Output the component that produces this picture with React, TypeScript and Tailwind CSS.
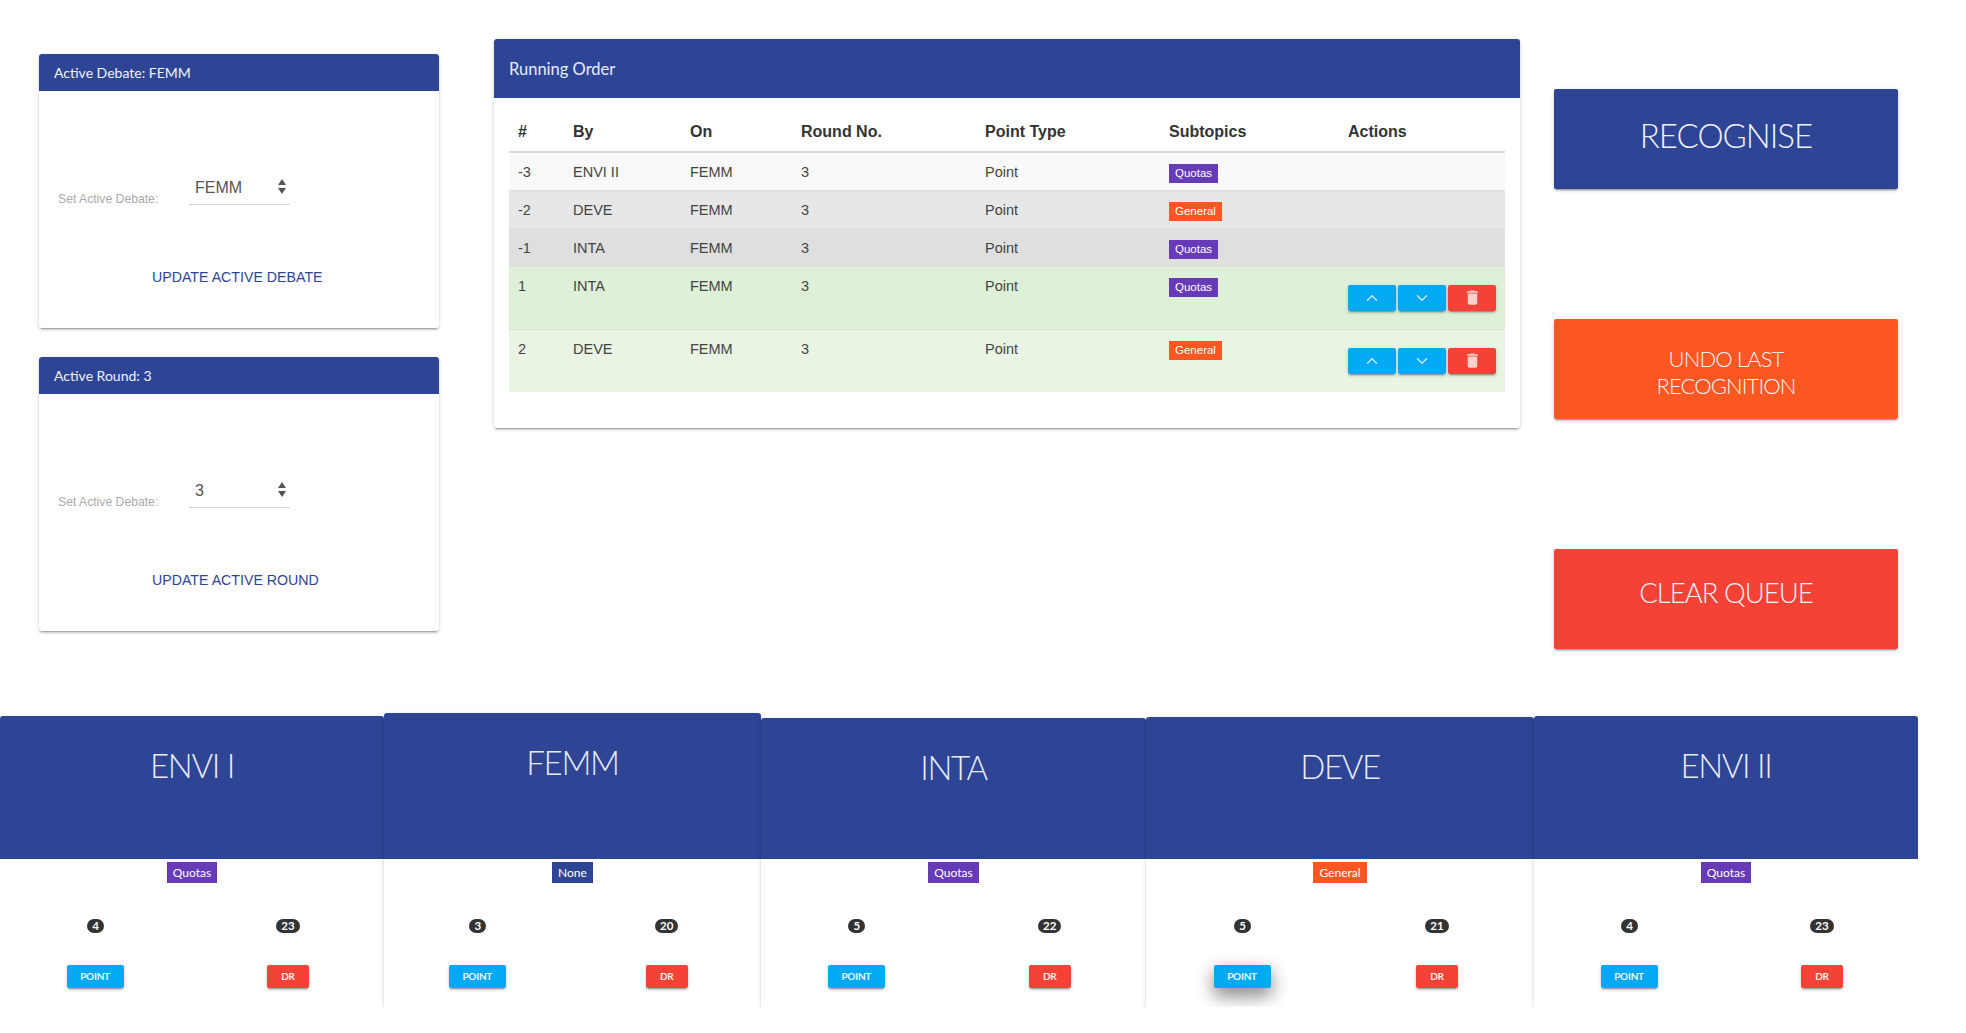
import { ChevronDown, ChevronUp } from "lucide-react";

const DEPTH_1 =
  "shadow-[0_2px_2px_0_rgba(0,0,0,0.14),0_3px_1px_-2px_rgba(0,0,0,0.2),0_1px_5px_0_rgba(0,0,0,0.12)]";

const TOPIC_COLOR: Record<string, string> = {
  Quotas: "bg-[#673ab7]",
  General: "bg-[#ff5722]",
  None: "bg-[#2e4595]",
};

const queue = [
  { n: "-3", by: "ENVI II", topic: "Quotas", bg: "bg-[#f9f9f9]" },
  { n: "-2", by: "DEVE", topic: "General", bg: "bg-[#e7e7e7]" },
  { n: "-1", by: "INTA", topic: "Quotas", bg: "bg-[#dfdfdf]" },
  { n: "1", by: "INTA", topic: "Quotas", bg: "bg-[#dff0d8]", actions: true },
  { n: "2", by: "DEVE", topic: "General", bg: "bg-[#eaf4e4]", actions: true },
];

// headers share a baseline at the bottom, so the taller cards start higher up
const committees = [
  { name: "ENVI I", topic: "Quotas", points: 4, drs: 23, width: "w-[384px]", top: "mt-[5px]", head: "h-[143px]" },
  { name: "FEMM", topic: "None", points: 3, drs: 20, width: "w-[377px]", top: "mt-[2px]", head: "h-[146px]" },
  { name: "INTA", topic: "Quotas", points: 5, drs: 22, width: "w-[385px]", top: "mt-[7px]", head: "h-[141px]" },
  { name: "DEVE", topic: "General", points: 5, drs: 21, width: "w-[388px]", top: "mt-[6px]", head: "h-[142px]", hover: true },
  { name: "ENVI II", topic: "Quotas", points: 4, drs: 23, width: "w-[384px]", top: "mt-[5px]", head: "h-[143px]" },
];

function SettingCard({
  title,
  label,
  value,
  action,
}: {
  title: string;
  label: string;
  value: string;
  action: string;
}) {
  return (
    <div className={`h-[274px] overflow-hidden rounded-[3px] bg-white ${DEPTH_1}`}>
      <div className="flex h-[37px] items-center bg-[#2e4595] px-[15px] font-['Lato'] text-[14px] text-[#f0f2fa]">
        {title}
      </div>
      <div className="flex h-[114px] items-end pl-[19px]">
        <span className="mb-[-1px] w-[100px] whitespace-nowrap text-[12.2px] leading-[14px] text-[#aaaaaa]">{label}</span>
        <div className="relative ml-[31px] flex h-[36px] w-[101px] items-center border-b border-[#d4d4d4] pl-[6px] pt-[2px] text-[16px] text-[#555555]">
          {value}
          <svg className="absolute right-[4px] top-[10px]" width="8" height="15" viewBox="0 0 8 15" fill="#555555">
            <path d="M4 0 8 6H0zM0 9h8l-4 6z" />
          </svg>
        </div>
      </div>
      <div className="mt-[64px] pl-[113px] text-[14.2px] leading-[16px] text-[#2e4595]">{action}</div>
    </div>
  );
}

function BigButton({ color, children }: { color: string; children: React.ReactNode }) {
  return (
    <div
      className={`flex h-[100px] items-center justify-center rounded-[2px] text-center font-['Lato'] font-light text-[#f0f2fa] ${color} ${DEPTH_1}`}
    >
      {children}
    </div>
  );
}

function ActionButton({ color, children }: { color: string; children: React.ReactNode }) {
  return (
    <div
      className={`flex h-[26px] w-[48px] items-center justify-center rounded-[2px] text-white/75 ${color} ${DEPTH_1}`}
    >
      {children}
    </div>
  );
}

function RunningOrder() {
  const th = "h-[39px] border-b-2 border-[#d9d9d9] pl-[9px] text-left align-middle text-[16px] font-bold text-[#333333]";
  const td = "pl-[9px] pt-[9px] align-top text-[14.5px] leading-[20px] text-[#444444]";
  return (
    <div className={`h-[389px] overflow-hidden rounded-[3px] bg-white ${DEPTH_1}`}>
      <div className="flex h-[59px] items-center bg-[#2e4595] px-[15px] pt-[2px] font-['Lato'] text-[16.5px] text-[#e8ebf6]">
        Running Order
      </div>
      <div className="px-[15px] pt-[15px]">
        <table className="w-[996px] table-fixed border-collapse">
          <thead>
            <tr>
              <th className={`${th} w-[55px]`}>#</th>
              <th className={`${th} w-[117px]`}>By</th>
              <th className={`${th} w-[111px]`}>On</th>
              <th className={`${th} w-[184px]`}>Round No.</th>
              <th className={`${th} w-[184px]`}>Point Type</th>
              <th className={`${th} w-[179px]`}>Subtopics</th>
              <th className={`${th} w-[166px]`}>Actions</th>
            </tr>
          </thead>
          <tbody>
            {queue.map((row) => (
              <tr
                key={row.n}
                className={`${row.actions ? "h-[63px]" : "h-[38px]"} border-b border-[#dddddd] last:border-b-0 ${row.bg}`}
              >
                <td className={td}>{row.n}</td>
                <td className={td}>{row.by}</td>
                <td className={td}>FEMM</td>
                <td className={td}>3</td>
                <td className={td}>Point</td>
                <td className={td}>
                  <span
                    className={`mt-[2px] block w-fit px-[6px] text-[11.5px] leading-[19px] text-white ${TOPIC_COLOR[row.topic]}`}
                  >
                    {row.topic}
                  </span>
                </td>
                <td className="pl-[9px] pt-[18px] align-top">
                  {row.actions && (
                    <div className="flex gap-[2px]">
                      <ActionButton color="bg-[#03a9f4]">
                        <ChevronUp size={18} strokeWidth={2} />
                      </ActionButton>
                      <ActionButton color="bg-[#03a9f4]">
                        <ChevronDown size={18} strokeWidth={2} />
                      </ActionButton>
                      <ActionButton color="bg-[#f44336]">
                        <svg width="19" height="19" viewBox="0 0 24 24" fill="currentColor">
                          <path d="M6 19c0 1.1.9 2 2 2h8c1.1 0 2-.9 2-2V7H6v12zM19 4h-3.5l-1-1h-5l-1 1H5v2h14V4z" />
                        </svg>
                      </ActionButton>
                    </div>
                  )}
                </td>
              </tr>
            ))}
          </tbody>
        </table>
      </div>
    </div>
  );
}

function CommitteeCard({ c }: { c: (typeof committees)[number] }) {
  return (
    <div className={`relative flex-none self-start rounded-t-[3px] bg-white ${c.width} ${c.top} ${DEPTH_1}`}>
      <div
        className={`flex justify-center rounded-t-[3px] bg-[#2e4595] pt-[27px] font-['Lato'] text-[33px] font-light leading-[44px] tracking-[-0.04em] text-[#e8ebf6] ${c.head}`}
      >
        {c.name}
      </div>
      <div className="h-[170px] font-['Lato']">
        <div className="flex justify-center pt-[3px]">
          <span className={`px-[6px] text-[12px] leading-[21px] text-white ${TOPIC_COLOR[c.topic]}`}>{c.topic}</span>
        </div>
        <div className="mt-[36px] grid grid-cols-2 justify-items-center">
          <span className="mr-[1px] h-[14px] min-w-[16px] rounded-full bg-[#333333] px-[5px] text-center text-[11.5px] font-bold leading-[14px] text-white">
            {c.points}
          </span>
          <span className="h-[14px] min-w-[16px] rounded-full bg-[#333333] px-[5px] text-center text-[11.5px] font-bold leading-[14px] text-white">
            {c.drs}
          </span>
        </div>
        <div className="mt-[32px] grid grid-cols-2 justify-items-center">
          <span
            className={`mr-[2px] h-[23px] w-[57px] rounded-[2px] bg-[#03a9f4] text-center text-[10px] font-bold leading-[23px] tracking-tight text-white/90 ${
              c.hover ? "shadow-[0_8px_17px_0_rgba(0,0,0,0.35),0_6px_20px_0_rgba(0,0,0,0.19)]" : DEPTH_1
            }`}
          >
            POINT
          </span>
          <span
            className={`h-[23px] w-[42px] rounded-[2px] bg-[#f44336] text-center text-[10px] font-bold leading-[23px] tracking-tight text-white/90 ${DEPTH_1}`}
          >
            DR
          </span>
        </div>
      </div>
    </div>
  );
}

export default function App() {
  return (
    <div className="h-[1033px] w-[1966px] overflow-hidden bg-white font-['Liberation_Sans',sans-serif]">
      <div className="flex h-[711px] items-start">
        <div className="ml-[39px] mt-[54px] flex w-[400px] flex-col gap-[29px]">
          <SettingCard title="Active Debate: FEMM" label="Set Active Debate:" value="FEMM" action="UPDATE ACTIVE DEBATE" />
          <SettingCard title="Active Round: 3" label="Set Active Debate:" value="3" action="UPDATE ACTIVE ROUND" />
        </div>
        <div className="ml-[55px] mt-[39px] w-[1026px]">
          <RunningOrder />
        </div>
        <div className="ml-[34px] mt-[89px] flex w-[344px] flex-col gap-[130px]">
          <BigButton color="bg-[#2e4595]">
            <span className="pb-[6px] text-[33px] tracking-[-0.03em]">RECOGNISE</span>
          </BigButton>
          <BigButton color="bg-[#ff5722]">
            <span className="pt-[5px] text-[22px] leading-[27px] tracking-[-0.04em]">
              UNDO LAST
              <br />
              RECOGNITION
            </span>
          </BigButton>
          <BigButton color="bg-[#f44336]">
            <span className="pb-[12px] text-[27.5px] tracking-[-0.035em]">CLEAR QUEUE</span>
          </BigButton>
        </div>
      </div>
      <div className="flex h-[296px] w-[1918px] overflow-hidden">
        {committees.map((c) => (
          <CommitteeCard key={c.name} c={c} />
        ))}
      </div>
    </div>
  );
}
